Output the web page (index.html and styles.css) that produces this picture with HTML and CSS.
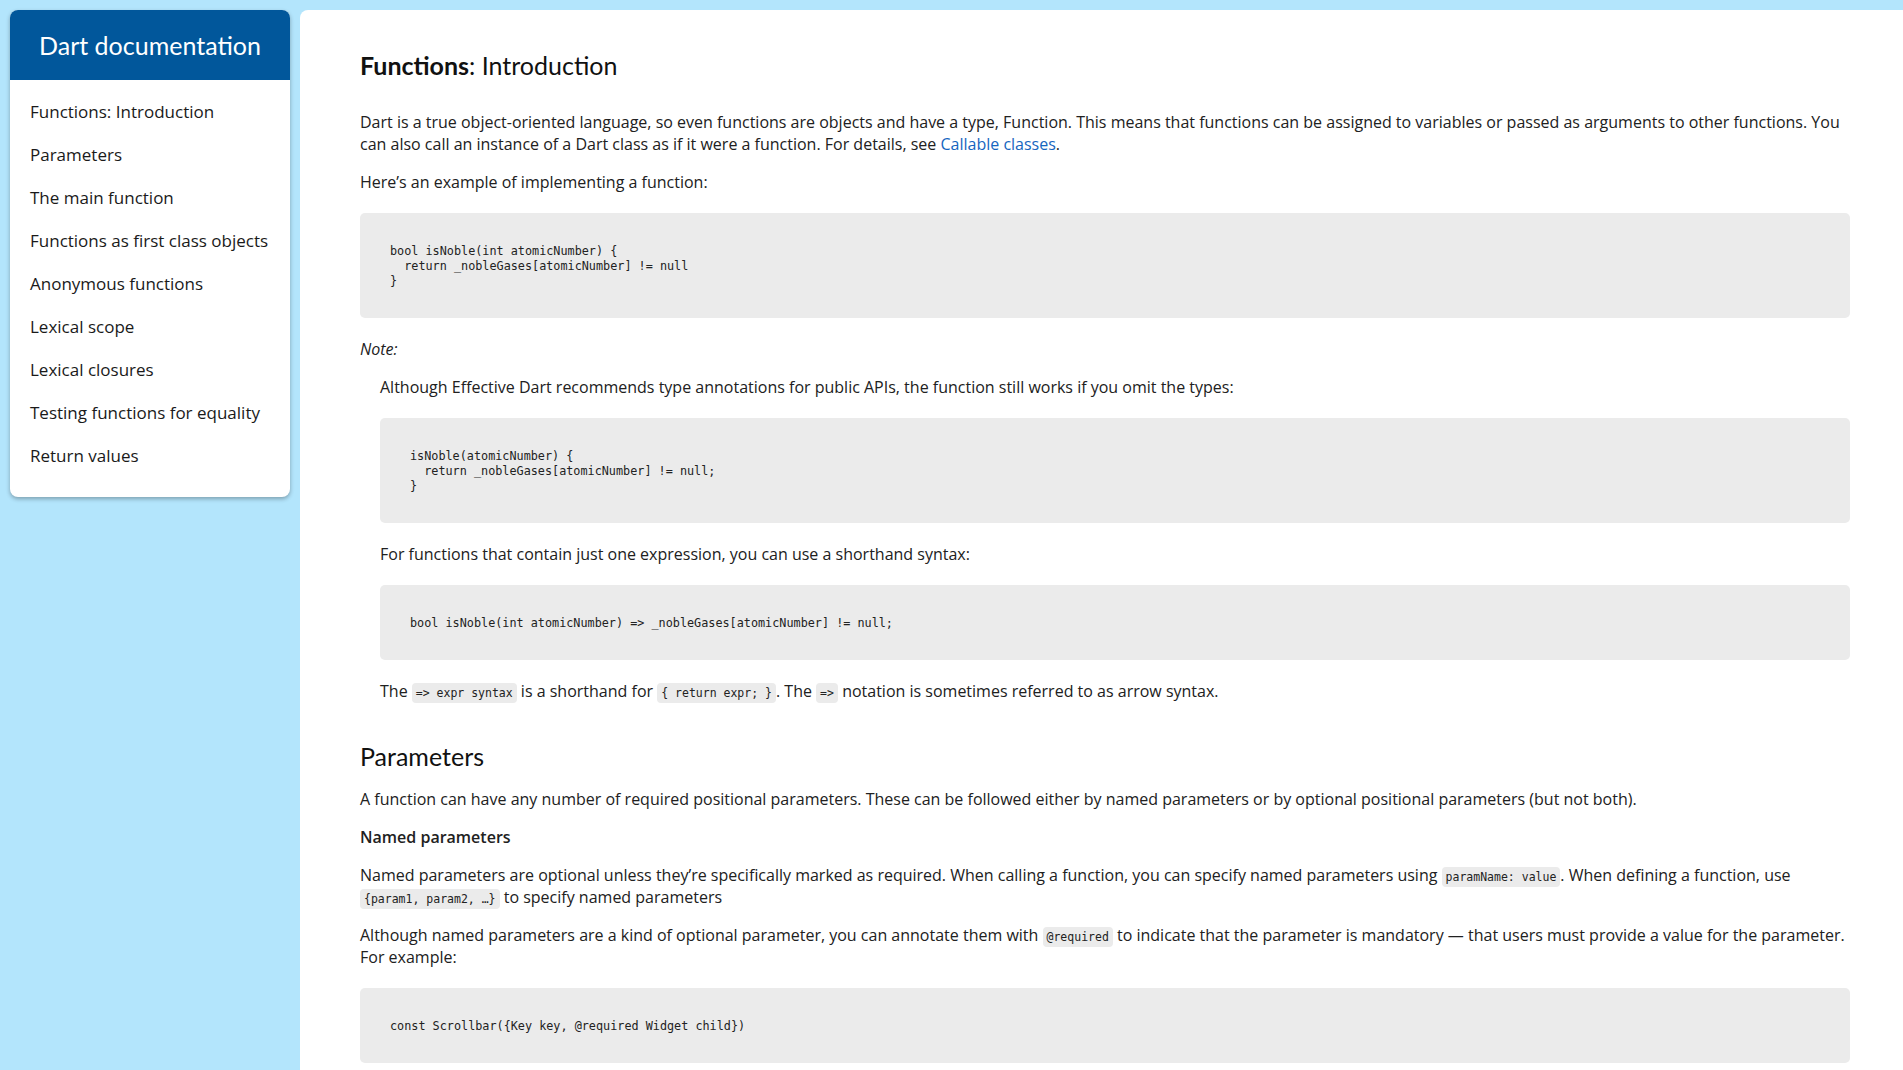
FILE: index.html
```html
<!DOCTYPE html>
<html lang="en">
<head>
<meta charset="utf-8">
<title>Dart documentation</title>
<link rel="stylesheet" href="styles.css">
</head>
<body>
<div class="layout">
  <aside class="sidebar">
    <div class="sidebar-title">Dart documentation</div>
    <ul class="nav">
      <li>Functions: Introduction</li>
      <li>Parameters</li>
      <li>The main function</li>
      <li>Functions as first class objects</li>
      <li>Anonymous functions</li>
      <li>Lexical scope</li>
      <li>Lexical closures</li>
      <li>Testing functions for equality</li>
      <li>Return values</li>
    </ul>
  </aside>
  <main class="content">
    <h1 class="title"><b>Functions</b>: Introduction</h1>
    <p>Dart is a true object-oriented language, so even functions are objects and have a type, Function. This means that functions can be assigned to variables or passed as arguments to other functions. You can also call an instance of a Dart class as if it were a function. For details, see <a class="link" href="#">Callable classes</a>.</p>
    <p>Here’s an example of implementing a function:</p>
<pre class="code">bool isNoble(int atomicNumber) {
  return _nobleGases[atomicNumber] != null
}</pre>
    <p class="note-label">Note:</p>
    <div class="note">
      <p>Although Effective Dart recommends type annotations for public APIs, the function still works if you omit the types:</p>
<pre class="code">isNoble(atomicNumber) {
  return _nobleGases[atomicNumber] != null;
}</pre>
      <p>For functions that contain just one expression, you can use a shorthand syntax:</p>
<pre class="code">bool isNoble(int atomicNumber) =&gt; _nobleGases[atomicNumber] != null;</pre>
      <p>The <code class="inline">=&gt; expr syntax</code> is a shorthand for <code class="inline">{ return expr; }</code>. The <code class="inline">=&gt;</code> notation is sometimes referred to as arrow syntax.</p>
    </div>
    <h2 class="section">Parameters</h2>
    <p>A function can have any number of required positional parameters. These can be followed either by named parameters or by optional positional parameters (but not both).</p>
    <h3 class="sub">Named parameters</h3>
    <p>Named parameters are optional unless they’re specifically marked as required. When calling a function, you can specify named parameters using <code class="inline">paramName: value</code>. When defining a function, use <code class="inline">{param1, param2, …}</code> to specify named parameters</p>
    <p>Although named parameters are a kind of optional parameter, you can annotate them with <code class="inline">@required</code> to indicate that the parameter is mandatory — that users must provide a value for the parameter. For example:</p>
<pre class="code">const Scrollbar({Key key, @required Widget child})</pre>
  </main>
</div>
</body>
</html>
```
FILE: styles.css
```css
html, body {
  margin: 0;
  padding: 0;
}
body {
  background: #b3e5fc;
  font-family: "Open Sans", "Noto Sans", sans-serif;
  font-size: 16px;
  color: #212121;
}
.layout {
  display: flex;
  align-items: flex-start;
  gap: 10px;
  padding: 10px 0 0 10px;
  min-height: 1060px;
}
.sidebar {
  width: 280px;
  flex: 0 0 280px;
  background: #fff;
  border-radius: 8px;
  overflow: hidden;
  box-shadow: 0 2px 4px rgba(0, 0, 0, 0.3);
}
.sidebar-title {
  height: 70px;
  display: flex;
  align-items: center;
  justify-content: center;
  background: #01579b;
  color: #fff;
  font-family: "Lato", sans-serif;
  font-size: 25px;
}
.nav {
  list-style: none;
  margin: 0;
  padding: 10px 0 20px 0;
}
.nav li {
  padding: 10px 20px;
  font-size: 17px;
  line-height: 23px;
  color: #1a1a1a;
}
.content {
  flex: 1;
  align-self: stretch;
  background: #fff;
  border-top-left-radius: 8px;
  padding: 40px 53px 20px 60px;
  min-height: 1000px;
}
.title {
  font-family: "Lato", sans-serif;
  font-weight: 400;
  font-size: 25px;
  line-height: 30px;
  margin: 0 0 31px 0;
  color: #111;
}
.title b {
  font-weight: 700;
}
p {
  margin: 16px 0;
  line-height: 22px;
}
.content > p:first-of-type {
  margin-top: 0;
}
.link {
  color: #1565c0;
  text-decoration: none;
}
.code {
  margin: 20px 0;
  padding: 31px 30px 29px 30px;
  background: #ebebeb;
  border-radius: 5px;
  font-family: "DejaVu Sans Mono", "Liberation Mono", monospace;
  font-size: 11.8px;
  line-height: 15px;
  color: #222;
}
.note-label {
  font-style: italic;
}
.note {
  margin-left: 20px;
}
.inline {
  font-family: "DejaVu Sans Mono", "Liberation Mono", monospace;
  font-size: 11.5px;
  line-height: 1;
  white-space: nowrap;
  background: #ebebeb;
  border-radius: 4px;
  padding: 3px 4px;
  color: #222;
}
.section {
  font-family: "Lato", sans-serif;
  font-weight: 400;
  font-size: 25px;
  line-height: 31px;
  margin: 39px 0 14px 0;
  color: #111;
}
.sub {
  font-size: 16px;
  font-weight: 600;
  line-height: 22px;
  margin: 16px 0;
}
```
